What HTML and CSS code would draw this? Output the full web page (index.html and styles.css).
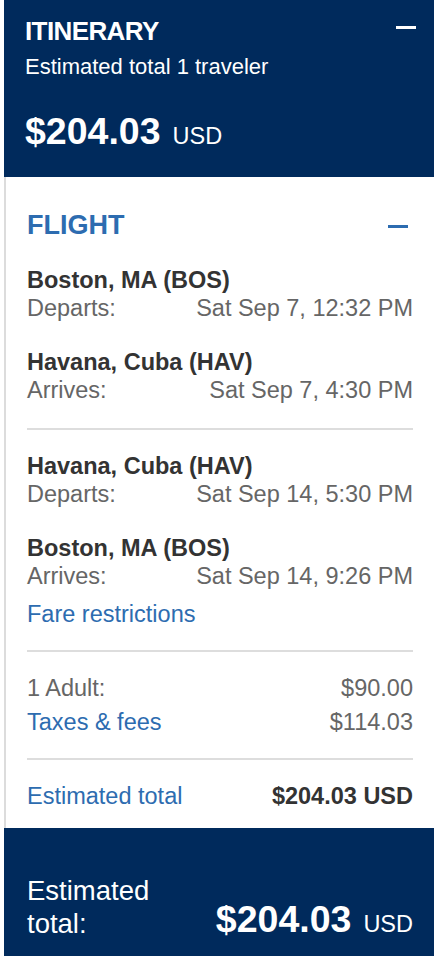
FILE: index.html
```html
<!DOCTYPE html>
<html>
<head>
<meta charset="utf-8">
<link rel="stylesheet" href="styles.css">
</head>
<body>
<div class="page">
  <header class="head">
    <div class="head-top">
      <div class="head-title">ITINERARY</div>
      <span class="minus minus-white"></span>
    </div>
    <div class="head-sub">Estimated total 1 traveler</div>
    <div class="head-price"><span class="amt">$204.03</span><span class="cur">USD</span></div>
  </header>

  <section class="body">
    <div class="flight-head">
      <div class="flight-title">FLIGHT</div>
      <span class="minus minus-blue"></span>
    </div>

    <div class="leg">
      <div class="stop">
        <div class="city">Boston, MA (BOS)</div>
        <div class="row"><span>Departs:</span><span>Sat Sep 7, 12:32 PM</span></div>
      </div>
      <div class="stop">
        <div class="city">Havana, Cuba (HAV)</div>
        <div class="row"><span>Arrives:</span><span>Sat Sep 7, 4:30 PM</span></div>
      </div>
    </div>

    <div class="leg leg-return">
      <div class="stop">
        <div class="city">Havana, Cuba (HAV)</div>
        <div class="row"><span>Departs:</span><span>Sat Sep 14, 5:30 PM</span></div>
      </div>
      <div class="stop">
        <div class="city">Boston, MA (BOS)</div>
        <div class="row"><span>Arrives:</span><span>Sat Sep 14, 9:26 PM</span></div>
      </div>
      <a class="link fare">Fare restrictions</a>
    </div>

    <div class="prices">
      <div class="row price-row"><span>1 Adult:</span><span>$90.00</span></div>
      <div class="row price-row"><a class="link">Taxes &amp; fees</a><span>$114.03</span></div>
    </div>

    <div class="total-row">
      <a class="link">Estimated total</a>
      <span class="total-val">$204.03 USD</span>
    </div>
  </section>

  <footer class="foot">
    <div class="foot-label">Estimated<br>total:</div>
    <div class="foot-price"><span class="amt">$204.03</span><span class="cur">USD</span></div>
  </footer>
</div>
</body>
</html>
```

FILE: styles.css
```css
html, body {
  margin: 0;
  padding: 0;
  background: #ffffff;
}
body {
  font-family: "Liberation Sans", Arial, sans-serif;
}
.page {
  padding-left: 4px;
  width: 430px;
}
.head {
  background: #002a5c;
  color: #ffffff;
  height: 177px;
  box-sizing: border-box;
  padding: 16px 18px 0 21px;
}
.head-top {
  display: flex;
  justify-content: space-between;
  align-items: flex-start;
}
.head-title {
  font-size: 26px;
  font-weight: bold;
  line-height: 30px;
  letter-spacing: -0.6px;
}
.minus {
  display: block;
  width: 20px;
  height: 3px;
}
.minus-white {
  background: #ffffff;
  margin-top: 10px;
}
.head-sub {
  font-size: 22px;
  line-height: 26px;
  margin-top: 8px;
}
.head-price {
  margin-top: 30px;
  line-height: 42px;
}
.amt {
  font-size: 37.5px;
  font-weight: bold;
}
.cur {
  font-size: 23.5px;
  margin-left: 12px;
}
.body {
  border-left: 2px solid #dcdcdc;
  padding: 32px 21px 18px 21px;
  font-size: 23.5px;
  line-height: 28px;
  color: #666666;
}
.flight-head {
  display: flex;
  justify-content: space-between;
  align-items: center;
  padding-right: 5px;
}
.flight-title {
  font-size: 27px;
  line-height: 32px;
  font-weight: bold;
  color: #2d6cb0;
}
.minus-blue {
  background: #2d6cb0;
  margin-top: 3px;
}
.leg {
  display: flex;
  flex-direction: column;
  gap: 26px;
  margin-top: 25px;
  padding-bottom: 24px;
  border-bottom: 2px solid #dddddd;
}
.leg-return {
  margin-top: 0;
  padding-top: 22px;
  padding-bottom: 22px;
}
.city {
  font-weight: bold;
  color: #333333;
}
.row {
  display: flex;
  justify-content: space-between;
}
.link {
  color: #2d6cb0;
  text-decoration: none;
}
.fare {
  margin-top: -16px;
}
.prices {
  padding: 22px 0 22px 0;
  border-bottom: 2px solid #dddddd;
  display: flex;
  flex-direction: column;
  gap: 6px;
}
.total-row {
  display: flex;
  justify-content: space-between;
  margin-top: 22px;
}
.total-val {
  font-weight: bold;
  color: #333333;
}
.foot {
  background: #002a5c;
  color: #ffffff;
  height: 128px;
  box-sizing: border-box;
  padding: 46px 21px 0 23px;
  display: flex;
  justify-content: space-between;
  align-items: flex-start;
}
.foot-label {
  font-size: 27.5px;
  line-height: 33px;
}
.foot-price {
  line-height: 42px;
  margin-top: 24px;
}
```
